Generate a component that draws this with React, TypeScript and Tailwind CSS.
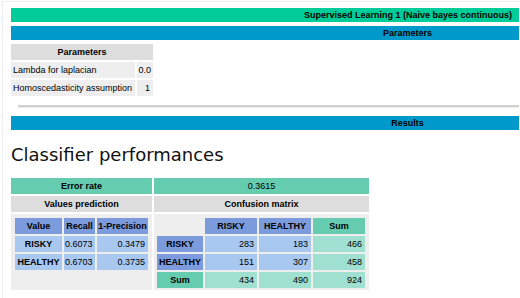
const small = "font-['Liberation_Sans',Arial,sans-serif] text-[9px] text-black";

const recallRows = [
  { name: 'RISKY', recall: '0.6073', prec: '0.3479' },
  { name: 'HEALTHY', recall: '0.6703', prec: '0.3735' },
];

const matrix = [
  { name: 'RISKY', vals: ['283', '183', '466'] },
  { name: 'HEALTHY', vals: ['151', '307', '458'] },
];

function Bar({ label, color, align }: { label: string; color: string; align: 'right' | 'center' }) {
  return (
    <div
      className={`h-[14px] leading-[14px] font-bold ${color} ${align === 'right' ? 'text-right pr-[7px]' : 'text-center pl-[285px]'}`}
    >
      {label}
    </div>
  );
}

export default function App() {
  return (
    <div className={`h-[298px] w-[520px] overflow-hidden bg-white ${small}`}>
      <div className="ml-[2px] mt-[1px] h-[297px] border-l border-t border-[#eeeeee] pl-[8px] pr-[1px] pt-[6px]">
        <Bar label="Supervised Learning 1 (Naive bayes continuous)" color="bg-[#00cc99]" align="right" />
        <div className="mt-[4px]">
          <Bar label="Parameters" color="bg-[#0099cc]" align="center" />
        </div>

        {/* Parameters */}
        <div className="mt-[4px] grid w-[142px] grid-cols-[124px_16px] gap-[2px] leading-[16px]">
          <div className="col-span-2 h-[16px] bg-[#dddddd] text-center font-bold">Parameters</div>
          <div className="h-[16px] bg-[#eeeeee] pl-[2px]">Lambda for laplacian</div>
          <div className="h-[16px] bg-[#eeeeee] pr-[2px] text-right">0.0</div>
          <div className="h-[16px] bg-[#eeeeee] pl-[2px]">Homoscedasticity assumption</div>
          <div className="h-[16px] bg-[#eeeeee] pr-[3px] text-right">1</div>
        </div>

        <div className="ml-[7px] mt-[9px] h-[3px] border-t-2 border-b border-t-[#d2d2cc] border-b-[#ececea]" />

        <div className="mt-[8px]">
          <Bar label="Results" color="bg-[#0099cc]" align="center" />
        </div>

        <h1 className="mt-[14px] h-[22px] font-['DejaVu_Sans',sans-serif] text-[18px] leading-[22px] text-[#111111]">
          Classifier performances
        </h1>

        {/* Results table */}
        <div className="mt-[12px] grid w-[358px] grid-cols-[141px_215px] gap-[2px] leading-[16px]">
          <div className="h-[16px] bg-[#66ccb0] text-center font-bold">Error rate</div>
          <div className="h-[16px] bg-[#66ccb0] text-center">0.3615</div>
          <div className="h-[16px] bg-[#dddddd] text-center font-bold">Values prediction</div>
          <div className="h-[16px] bg-[#dddddd] text-center font-bold">Confusion matrix</div>

          <div className="h-[76px] bg-[#eeeeee] pl-[4px] pt-[4px]">
            <div className="grid grid-cols-[47px_31px_51px] gap-[2px]">
              <div className="h-[16px] bg-[#7b9bdc] text-center font-bold">Value</div>
              <div className="h-[16px] bg-[#7b9bdc] text-center font-bold">Recall</div>
              <div className="h-[16px] bg-[#7b9bdc] text-center font-bold">1-Precision</div>
              {recallRows.map(r => (
                <div key={r.name} className="contents">
                  <div className="h-[16px] bg-[#a9c8f0] text-center font-bold">{r.name}</div>
                  <div className="h-[16px] bg-[#a9c8f0] pl-[1px]">{r.recall}</div>
                  <div className="h-[16px] bg-[#a9c8f0] pr-[3px] text-right">{r.prec}</div>
                </div>
              ))}
            </div>
          </div>

          <div className="h-[76px] bg-[#eeeeee] pl-[3px] pt-[4px]">
            <div className="grid grid-cols-[46px_52px_52px_52px] gap-[2px]">
              <div className="h-[16px]" />
              <div className="h-[16px] bg-[#7b9bdc] text-center font-bold">RISKY</div>
              <div className="h-[16px] bg-[#7b9bdc] text-center font-bold">HEALTHY</div>
              <div className="h-[16px] bg-[#66ccb0] text-center font-bold">Sum</div>
              {matrix.map(r => (
                <div key={r.name} className="contents">
                  <div className="h-[16px] bg-[#7b9bdc] text-center font-bold">{r.name}</div>
                  <div className="h-[16px] bg-[#a9c8f0] pr-[3px] text-right">{r.vals[0]}</div>
                  <div className="h-[16px] bg-[#a9c8f0] pr-[3px] text-right">{r.vals[1]}</div>
                  <div className="h-[16px] bg-[#a0e0d0] pr-[3px] text-right">{r.vals[2]}</div>
                </div>
              ))}
              <div className="h-[16px] bg-[#66ccb0] text-center font-bold">Sum</div>
              <div className="h-[16px] bg-[#a0e0d0] pr-[3px] text-right">434</div>
              <div className="h-[16px] bg-[#a0e0d0] pr-[3px] text-right">490</div>
              <div className="h-[16px] bg-[#a0e0d0] pr-[3px] text-right">924</div>
            </div>
          </div>
        </div>
      </div>
    </div>
  );
}
